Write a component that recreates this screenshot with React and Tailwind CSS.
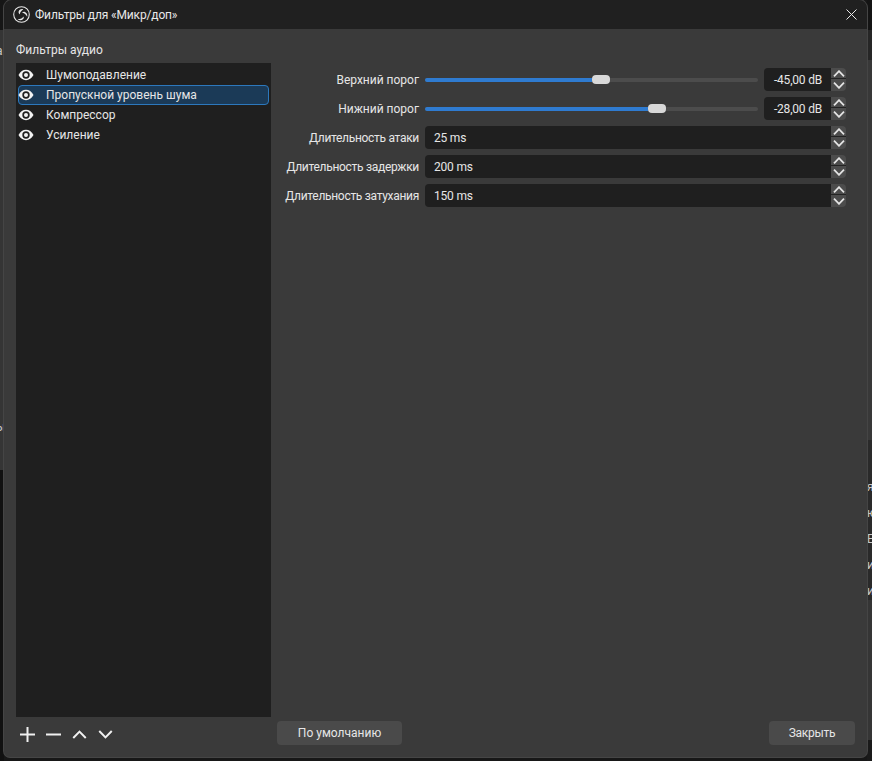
const font = "font-['Roboto',sans-serif]";

const filters = ['Шумоподавление', 'Пропускной уровень шума', 'Компрессор', 'Усиление'];

const rows = [
  { label: 'Верхний порог', slider: 167, value: '-45,00 dB' },
  { label: 'Нижний порог', slider: 223, value: '-28,00 dB' },
  { label: 'Длительность атаки', value: '25 ms' },
  { label: 'Длительность задержки', value: '200 ms' },
  { label: 'Длительность затухания', value: '150 ms' },
];

// slivers of the main window showing behind the dialog
const rightScraps = [
  { text: 'я', className: 'top-[479px]' },
  { text: 'ю', className: 'top-[505px]' },
  { text: 'Е', className: 'top-[531px]' },
  { text: 'и', className: 'top-[557px]' },
  { text: 'и', className: 'top-[583px]' },
];

function Backdrop() {
  return (
    <>
      <div className="absolute inset-y-0 left-0 flex w-1 flex-col">
        <div className="h-[30px] bg-[#161616]" />
        <div className="h-[440px] bg-[#353535]" />
        <div className="flex-1 bg-[#111111]" />
      </div>
      <div className="absolute inset-y-0 right-0 flex w-[5px] flex-col">
        <div className="h-[30px] bg-[#141414]" />
        <div className="h-[30px] bg-[#262626]" />
        <div className="h-[380px] bg-[#383838]" />
        <div className="h-[160px] bg-[#2a2a2a]" />
        <div className="h-[140px] bg-[#353535]" />
        <div className="flex-1 bg-[#1a1a1a]" />
      </div>
      <span className="absolute left-[-4px] top-[43px] text-xs text-[#c8c8c8]">а</span>
      <span className="absolute left-[-4px] top-[419px] text-xs text-[#c8c8c8]">ы</span>
      {rightScraps.map((s) => (
        <span key={s.className} className={`absolute left-[867px] text-xs text-[#c8c8c8] ${s.className}`}>
          {s.text}
        </span>
      ))}
    </>
  );
}

function ObsLogo() {
  return (
    <svg width="17" height="17" viewBox="0 0 24 24" fill="none">
      <circle cx="12" cy="12" r="11" stroke="#e8e8e8" strokeWidth="1.5" />
      <path d="M14.500 4.500c-3.200-.8-6 1-6.600 3.600-.3 1.700.6 3 1.700 3.700C9.600 9 11.500 6.600 14.500 4.500z" fill="#e8e8e8" />
      <path d="M20 15c.8-3.200-.8-5.900-3.300-6.700-1.600-.5-3.100.2-3.900 1.200 2.700.1 5.100 2 7.200 5.500z" fill="#e8e8e8" />
      <path d="M6.500 18.500c2.400 2.200 5.500 2.100 7.500.3 1.300-1.200 1.400-2.800 1-4-1.400 2.300-4.200 3.600-8.500 3.700z" fill="#e8e8e8" />
    </svg>
  );
}

function EyeIcon() {
  return (
    <svg width="16" height="12" viewBox="0 0 16 12" className="-ml-px shrink-0">
      <path d="M.5 6C2.300 2.600 5 .8 8 .8s5.700 1.800 7.500 5.200C13.700 9.400 11 11.200 8 11.200S2.300 9.400.5 6z" fill="#f2f2f2" />
      <circle cx="8" cy="6" r="3.700" fill="#1f1f1f" />
      <circle cx="8" cy="6" r="2" fill="#f2f2f2" />
    </svg>
  );
}

function Chevron({ up, width = 12, height = 7, stroke = 1.8, color = '#e4e4e4' }) {
  const d = up ? 'M1 6.300 6 1.200l5 5.100' : 'M1 .7 6 5.800l5-5.100';
  return (
    <svg width={width} height={height} viewBox="0 0 12 7" fill="none" stroke={color} strokeWidth={stroke}>
      <path d={d} />
    </svg>
  );
}

function Spinner() {
  return (
    <div className="flex w-[15px] flex-col rounded-r bg-[#4c4c4c]">
      <div className="flex h-[11px] items-center justify-center border-b border-[#232323]">
        <Chevron up />
      </div>
      <div className="flex flex-1 items-center justify-center">
        <Chevron />
      </div>
    </div>
  );
}

function Row({ label, slider, value }) {
  return (
    <div className="flex h-[23px] items-center">
      <div
        className={`w-[142px] whitespace-nowrap text-right text-xs text-[#e6e6e6] ${
          slider ? '' : 'tracking-[-0.3px]'
        }`}
      >
        {label}
      </div>
      <div className="ml-[6px] flex h-full flex-1">
        {slider ? (
          <>
            <div className="flex flex-1 items-center">
              <div className="flex h-[4px] w-[333px] items-center rounded-full bg-[#4c4c4c]">
                <div className="h-full rounded-l-full bg-[#2f7bd0]" style={{ width: slider }} />
                <div className="h-[9px] w-[18px] shrink-0 rounded-sm bg-[#d8d8d8]" />
              </div>
            </div>
            <div className="flex w-[67px] items-center justify-end rounded-l bg-[#1f1f1f] pr-[9px] text-xs tracking-[-0.2px] text-[#e6e6e6]">
              {value}
            </div>
          </>
        ) : (
          <div className="flex flex-1 items-center rounded-l bg-[#1f1f1f] pl-[9px] text-xs tracking-[-0.2px] text-[#e6e6e6]">
            {value}
          </div>
        )}
        <Spinner />
      </div>
    </div>
  );
}

export default function App() {
  return (
    <div className={`relative h-[761px] w-[872px] overflow-hidden bg-[#171717] pb-1 pl-1 pr-[5px] ${font}`}>
      <Backdrop />
      <div className="relative flex h-full flex-col overflow-hidden rounded-b-md rounded-t-lg bg-[#3a3a3a] ring-1 ring-[#454545]">
        {/* Title bar */}
        <div className="flex h-[29px] shrink-0 items-center bg-[#202020] pl-[9px] pr-[10px]">
          <ObsLogo />
          <span className="ml-[5px] text-xs tracking-[-0.15px] text-[#e8e8e8]">Фильтры для «Микр/доп»</span>
          <svg width="11" height="11" viewBox="0 0 11 11" stroke="#e8e8e8" strokeWidth="1" className="ml-auto">
            <path d="M.5.5l10 10M10.500.5l-10 10" />
          </svg>
        </div>

        <div className="flex flex-1 flex-col pl-3 pr-3 pt-[13px]">
          <div className="h-[21px] text-xs leading-4 text-[#e6e6e6]">Фильтры аудио</div>

          <div className="flex min-h-0 flex-1 gap-[6px]">
            {/* Filter list */}
            <div className="flex w-[255px] shrink-0 flex-col bg-[#1f1f1f] px-[2px] pt-[2px]">
              {filters.map((name, i) => (
                <div
                  key={name}
                  className={`flex h-5 items-center rounded-sm text-xs text-[#e6e6e6] ${
                    i === 1 ? 'border border-[#2c78bd] bg-[#1b3a57]' : 'border border-transparent'
                  }`}
                >
                  <EyeIcon />
                  <span className="ml-[12px]">{name}</span>
                </div>
              ))}
            </div>

            {/* Properties */}
            <div className="flex flex-1 flex-col gap-[6px] pr-[9px] pt-[5px]">
              {rows.map((row) => (
                <Row key={row.label} {...row} />
              ))}
            </div>
          </div>

          {/* Bottom bar */}
          <div className="flex h-[40px] shrink-0 items-start pt-[4px]">
            <div className="flex h-[26px] w-[261px] items-center gap-[11px] pl-[4px]">
              <svg width="15" height="15" viewBox="0 0 15 15" stroke="#f0f0f0" strokeWidth="2">
                <path d="M0 7.500h15M7.500 0v15" />
              </svg>
              <svg width="15" height="15" viewBox="0 0 15 15" stroke="#f0f0f0" strokeWidth="2">
                <path d="M0 7.500h15" />
              </svg>
              <Chevron up width={15} height={9} stroke={1.6} color="#f0f0f0" />
              <Chevron width={15} height={9} stroke={1.6} color="#f0f0f0" />
            </div>
            <div className="flex h-6 w-[125px] items-center justify-center rounded bg-[#4a4a4a] text-xs text-[#e6e6e6]">
              По умолчанию
            </div>
            <div className="ml-auto flex h-6 w-[86px] items-center justify-center rounded bg-[#4a4a4a] text-xs tracking-[-0.3px] text-[#e6e6e6]">
              Закрыть
            </div>
          </div>
        </div>
      </div>
    </div>
  );
}
